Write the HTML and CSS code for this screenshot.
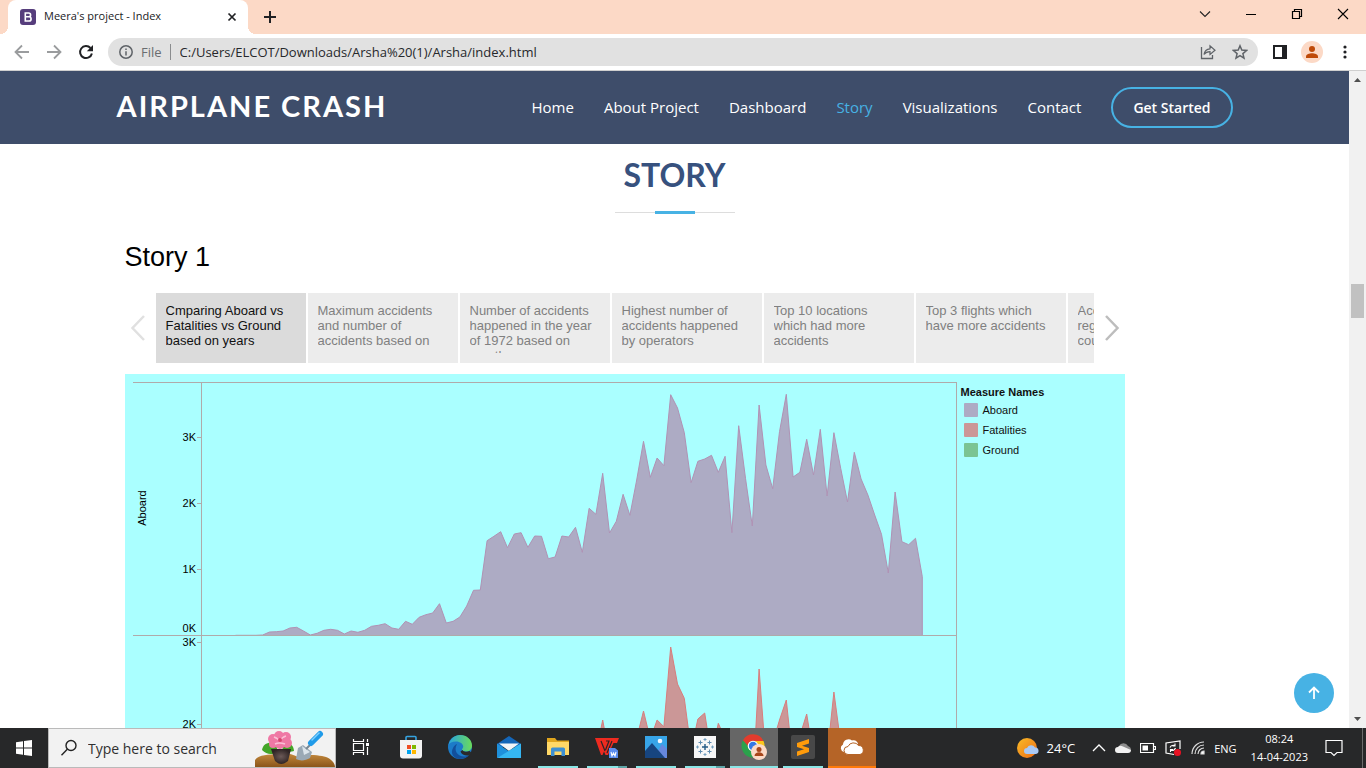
FILE: index.html
```html
<!DOCTYPE html>
<html lang="en">
<head>
<meta charset="utf-8">
<title>Meera's project - Index</title>
<link rel="stylesheet" href="styles.css">
</head>
<body>
<div class="tabstrip">
  <div class="tab">
    <svg class="favicon" width="16" height="16" viewBox="0 0 16 16" aria-hidden="true"><rect width="16" height="16" rx="3" fill="#563d7c"/><path d="M5.3 4h3.4a1.9 1.9 0 0 1 0 3.8H5.3zM5.3 7.8h3.7a2.1 2.1 0 0 1 0 4.2H5.3z" fill="none" stroke="#fff" stroke-width="1.6"/></svg>
    <span class="tab-title">Meera's project - Index</span>
    <button class="plain" aria-label="Close tab"><svg width="16" height="16" viewBox="0 0 16 16"><path d="M4.5 4.500l7 7M11.500 4.500l-7 7" stroke="#202124" stroke-width="1.700"/></svg></button>
  </div>
  <button class="plain new-tab" aria-label="New tab"><svg width="14" height="14" viewBox="0 0 14 14"><path d="M7 1v12M1 7h12" stroke="#202124" stroke-width="2"/></svg></button>
  <div class="window-buttons">
    <button class="plain" aria-label="Search tabs"><svg width="12" height="12" viewBox="0 0 12 12"><path d="M1 3.500l5 5 5-5" fill="none" stroke="#222" stroke-width="1.100"/></svg></button>
    <button class="plain" aria-label="Minimize"><svg width="12" height="12" viewBox="0 0 12 12"><path d="M1 6.500h10" stroke="#000"/></svg></button>
    <button class="plain" aria-label="Restore"><svg width="12" height="12" viewBox="0 0 12 12"><path d="M1.500 3.500h7v7h-7zM3.500 3.500v-2h7v7h-2" fill="none" stroke="#000" stroke-width="1.200"/></svg></button>
    <button class="plain" aria-label="Close"><svg width="12" height="12" viewBox="0 0 12 12"><path d="M1 1l10 10M11 1L1 11" stroke="#000" stroke-width="1.100"/></svg></button>
  </div>
</div>
<div class="toolbar">
  <button class="plain" aria-label="Back"><svg width="16" height="16" viewBox="0 0 16 16"><path d="M15 8H2M8 1.500L1.500 8 8 14.500" fill="none" stroke="#9a9c9e" stroke-width="1.800"/></svg></button>
  <button class="plain" aria-label="Forward"><svg width="16" height="16" viewBox="0 0 16 16"><path d="M1 8h13M8 1.500L14.500 8 8 14.500" fill="none" stroke="#9a9c9e" stroke-width="1.800"/></svg></button>
  <button class="plain" aria-label="Reload"><svg width="16" height="16" viewBox="0 0 16 16"><path d="M13.900 9.500A6 6 0 1 1 12.500 4" fill="none" stroke="#202124" stroke-width="2"/><path d="M15 1v6.200H8.800z" fill="#202124"/></svg></button>
  <div class="omnibox">
    <svg width="14" height="14" viewBox="0 0 14 14" aria-hidden="true"><circle cx="7" cy="7" r="6.200" fill="none" stroke="#5f6368" stroke-width="1.500"/><path d="M7 6.200v4.300M7 3.500v1.500" stroke="#5f6368" stroke-width="1.500"/></svg>
    <span class="scheme">File</span>
    <input class="url" type="text" aria-label="Address" value="C:/Users/ELCOT/Downloads/Arsha%20(1)/Arsha/index.html">
    <button class="plain" aria-label="Share"><svg width="16" height="16" viewBox="0 0 16 16"><path d="M1.500 3v11.500h11V11" fill="none" stroke="#5f6368" stroke-width="1.300"/><path d="M4 10.500C4.500 7 7 5 10 4.800V1.800L15 6.300l-5 4.200V7.700C7.500 7.700 5.500 8.500 4 10.500z" fill="none" stroke="#5f6368" stroke-width="1.200"/></svg></button>
    <button class="plain" aria-label="Bookmark"><svg width="16" height="16" viewBox="0 0 16 16"><path d="M8 1.800l1.800 4.300 4.700.4-3.600 3.100 1.100 4.600L8 11.700l-4 2.500 1.100-4.600-3.600-3.100 4.700-.4z" fill="none" stroke="#5f6368" stroke-width="1.500"/></svg></button>
  </div>
  <button class="plain" aria-label="Side panel"><svg width="14" height="14" viewBox="0 0 14 14"><path d="M1 1h12v12H1z" fill="none" stroke="#202124" stroke-width="2"/><path d="M9 0h5v14H9z" fill="#202124"/></svg></button>
  <button class="plain" aria-label="Profile"><svg width="22" height="22" viewBox="0 0 22 22"><circle cx="11" cy="11" r="11" fill="#fcd9c6"/><circle cx="11" cy="8" r="3" fill="#bf4a08"/><path d="M5 17v-1.500c0-2 3.500-3.200 6-3.200s6 1.200 6 3.200V17z" fill="#bf4a08"/></svg></button>
  <button class="plain" aria-label="Menu"><svg width="16" height="16" viewBox="0 0 16 16" fill="#202124"><circle cx="8" cy="3" r="1.600"/><circle cx="8" cy="8" r="1.600"/><circle cx="8" cy="13" r="1.600"/></svg></button>
</div>

<div class="viewport">
  <div class="page">
    <header class="site-header">
      <div class="container header-row">
        <a class="logo" href="#">AIRPLANE CRASH</a>
        <nav class="nav">
          <a href="#">Home</a>
          <a href="#">About Project</a>
          <a href="#">Dashboard</a>
          <a class="active" href="#">Story</a>
          <a href="#">Visualizations</a>
          <a href="#">Contact</a>
          <a class="cta" href="#">Get Started</a>
        </nav>
      </div>
    </header>
    <main class="container">
      <div class="section-title">
        <h2>STORY</h2>
        <div class="rule"></div>
      </div>
      <section class="story">
        <h3>Story 1</h3>
        <div class="points">
          <button class="plain arrow" aria-label="Previous"><svg width="16" height="28" viewBox="0 0 16 28"><path d="M14 2L2.500 14 14 26" fill="none" stroke="#e0e0e0" stroke-width="2.500"/></svg></button>
          <div class="point-list">
            <button class="point selected"><span>Cmparing Aboard vs Fatalities vs Ground based on years</span></button>
            <button class="point"><span>Maximum accidents and number of accidents based on</span></button>
            <button class="point"><span>Number of accidents happened in the year of 1972 based on month</span></button>
            <button class="point"><span>Highest number of accidents happened by operators</span></button>
            <button class="point"><span>Top 10 locations which had more accidents</span></button>
            <button class="point"><span>Top 3 flights which have more accidents</span></button>
            <button class="point"><span>Accidents in<br>regions of<br>countries</span></button>
          </div>
          <button class="plain arrow" aria-label="Next"><svg width="16" height="28" viewBox="0 0 16 28"><path d="M2 2l11.500 12L2 26" fill="none" stroke="#bdbdbd" stroke-width="2.500"/></svg></button>
        </div>
        <div class="dashboard">
          <svg class="chart" viewBox="0 0 832 510" role="img" aria-label="Aboard and Fatalities by year">
            <g class="axis">
              <path d="M8 8.500h824M8 261.500h824M76.500 8v502M831.500 8v502M72 63.500h4M72 129.500h4M72 195.500h4M72 268.500h4M72 350.500h4"/>
            </g>
            <path id="aboard-area" class="aboard-area"/><path id="aboard-line" class="aboard-line"/>
            <path id="fatal-area" class="fatal-area"/><path id="fatal-line" class="fatal-line"/>
            <path class="axis" d="M76 261.500h756"/>
            <g class="ticks">
              <text x="71" y="67">3K</text><text x="71" y="133">2K</text><text x="71" y="199">1K</text><text x="71" y="258">0K</text>
              <text x="71" y="272">3K</text><text x="71" y="354">2K</text>
            </g>
            <text class="axis-name" transform="translate(21 134) rotate(-90)" text-anchor="middle">Aboard</text>
          </svg>
          <div class="legend">
            <h4>Measure Names</h4>
            <ul>
              <li><i class="swatch aboard"></i>Aboard</li>
              <li><i class="swatch fatal"></i>Fatalities</li>
              <li><i class="swatch ground"></i>Ground</li>
            </ul>
          </div>
        </div>
      </section>
    </main>
  </div>
  <div class="scrollbar" aria-hidden="true">
    <svg width="17" height="17" viewBox="0 0 17 17"><path d="M5 11h7L8.500 7z" fill="#505050"/></svg>
    <div class="track"><div class="thumb"></div></div>
    <svg width="17" height="17" viewBox="0 0 17 17"><path d="M5 6h7l-3.500 4z" fill="#505050"/></svg>
  </div>
  <a class="to-top" href="#" aria-label="Back to top"><svg width="16" height="16" viewBox="0 0 16 16"><path d="M8 14V3M3 7.500L8 2.500l5 5" fill="none" stroke="#fff" stroke-width="1.800"/></svg></a>
</div>

<footer class="taskbar">
  <button class="start" aria-label="Start"><svg width="16" height="16" viewBox="0 0 16 16" fill="#fff"><path d="M0 2.200L7 1.200v6.300H0zM8 1l8-1v7.500H8zM0 8.500h7v6.300L0 13.800zM8 8.500h8V16l-8-1z"/></svg></button>
  <label class="search">
    <svg width="18" height="18" viewBox="0 0 18 18"><circle cx="11" cy="6.500" r="5" fill="none" stroke="#222" stroke-width="1.400"/><path d="M7.300 10.300L1.500 16.200" stroke="#222" stroke-width="1.400"/></svg>
    <input type="text" placeholder="Type here to search" aria-label="Type here to search">
    <svg width="80" height="38" viewBox="0 0 80 38">
      <defs><linearGradient id="soil" x1="0" y1="0" x2="0" y2="1"><stop offset="0" stop-color="#c68b3f"/><stop offset="1" stop-color="#8a5519"/></linearGradient><radialGradient id="pot"><stop offset="0" stop-color="#6c5a58"/><stop offset="1" stop-color="#2e2424"/></radialGradient></defs>
      <path d="M0 38v-7c4-6 14-5 22-6 8-2 15 0 21 3 8-3 18-2 24-1 7 1 13 6 13 11z" fill="url(#soil)"/>
      <path d="M7 21c1-7 8-9 14-6l2 8c-6 3-11 3-16-2zM30 13c5 0 9 4 9 9-5 2-9 0-12-3z" fill="#43a528"/>
      <path d="M16 20h20l-3 12q-7 6-13 0z" fill="url(#pot)"/>
      <g fill="#ef78a5"><circle cx="18" cy="10" r="5"/><circle cx="24" cy="7" r="5"/><circle cx="31" cy="8" r="5"/><circle cx="32" cy="14" r="5"/><circle cx="25" cy="15" r="5"/><circle cx="18" cy="15" r="4"/><circle cx="25" cy="11" r="6"/></g>
      <path d="M19 8q5 2 5 4M31 7q-4 1-6 5M20 15q4-2 10 0" stroke="#fac0d6" stroke-width="1.500" fill="none"/><circle cx="25" cy="11" r="2" fill="#d8456f"/>
      <path d="M43 19l5-3 9 7-2 6c-5 3-10 3-14 1z" fill="#9aa9b5"/><path d="M47 17l8 6-6 3z" fill="#dce5eb"/>
      <path d="M51 20l7-7" stroke="#798894" stroke-width="2"/><path d="M56 14l9-9" stroke="#209be9" stroke-width="6" stroke-linecap="round"/><path d="M57 11l7-7" stroke="#7ed0ff" stroke-width="1.500" stroke-linecap="round"/>
    </svg>
  </label>
  <button class="app taskview" aria-label="Task view"><svg width="18" height="18" viewBox="0 0 18 18" fill="none" stroke="#fff" stroke-width="1.200"><path d="M1.500 5.500h10v7h-10zM1.500 1v2.500h10V1M1.500 17v-2.500h10V17M15.500 1v3M15.500 9v8"/><path d="M14 5h3v3h-3z" fill="#fff" stroke="none"/></svg></button>
  <button class="app" aria-label="Microsoft Store"><svg width="24" height="24" viewBox="0 0 24 24"><path d="M7 6V2.500Q7 1.500 8 1.500h8q1 0 1 1V6" fill="none" stroke="#36a3e0" stroke-width="1.600"/><path d="M1 5h22v15.500q0 3-3 3H4q-3 0-3-3z" fill="#f3f3f3"/><path d="M8 10h4v4H8z" fill="#f04e23"/><path d="M13 10h4v4h-4z" fill="#7fb900"/><path d="M8 15h4v4H8z" fill="#00a3ee"/><path d="M13 15h4v4h-4z" fill="#ffb800"/></svg></button>
  <button class="app" aria-label="Microsoft Edge"><svg width="24" height="24" viewBox="0 0 24 24"><defs><linearGradient id="edge-a" x1="0" x2="1"><stop offset="0" stop-color="#28a4df"/><stop offset="1" stop-color="#6bdc5a"/></linearGradient></defs><circle cx="12" cy="12" r="12" fill="#1c7bc8"/><path d="M.5 10C2 3.500 7 0 12 0c7 0 12 5 12 10.500 0 4-3 6-6 6-2.500 0-4-1-4-2 0-.8 1.200-1.300 1.200-3C15.200 9 12 6.500 8 6.500S1.500 8 .5 10z" fill="url(#edge-a)"/><path d="M9 9c-4 7 1 13 8 12.500 2 0 3.500-.8 4.700-1.900C19.500 22.500 16 24 12 24 5.500 24 2 18 5 13c1-2 2.500-3.500 4-4z" fill="#124f9c"/><path d="M14.500 15c1 2 4 2 7 1l2.500 2-2.500 2c-3 1.500-8 0-9-3.500z" fill="#2a2a2a"/></svg></button>
  <button class="app" aria-label="Mail"><svg width="24" height="24" viewBox="0 0 24 24"><path d="M0 9l12-8 12 8v3H0z" fill="#1466b8"/><path d="M2 8.500h20L12 16z" fill="#f2f5f8"/><path d="M0 8.500L13 17 0 23z" fill="#1e90dc"/><path d="M24 8.500V23H0z" fill="#35b6f2"/></svg></button>
  <button class="app open" aria-label="File Explorer"><svg width="24" height="24" viewBox="0 0 24 24"><path d="M1 3h8l2 2.500h12V12H1z" fill="#e0a61e"/><path d="M1 7h22v13H1z" fill="#ffd867"/><path d="M5 21v-7q0-1.500 1.500-1.500h11Q19 12.500 19 14v7h-3.500v-4.500h-7V21z" fill="#3d8fd1"/></svg></button>
  <button class="app open stacked" aria-label="WPS Office"><svg width="26" height="26" viewBox="0 0 26 26"><path d="M1 4h24l-2 5h-3.500L14 21h-2.500L10 17.500 8.500 21H7z" fill="#ee2b20"/><path d="M7 7l4 10M12 7h3l-3.500 9M18 7l-5 12" fill="none" stroke="#2b2526" stroke-width="1.200"/><path d="M15 14h6l3 2.500V24h-9z" fill="#5b8def"/><path d="M17 18l1 4 1.500-3 1.500 3 1-4" fill="none" stroke="#fff" stroke-width="1.100"/></svg></button>
  <button class="app open" aria-label="Photos"><svg width="22" height="22" viewBox="0 0 22 22"><path d="M0 0h22v22H0z" fill="#37a5e8"/><path d="M9 22L17 8l5 5v9z" fill="#6688dd"/><path d="M0 15l7-8 13 15H0z" fill="#17457f"/><circle cx="15" cy="5" r="2.300" fill="#f5f8ff"/></svg></button>
  <button class="app open stacked" aria-label="Tableau"><svg width="22" height="22" viewBox="0 0 22 22"><path d="M0 0h22v22H0z" fill="#f7f7f7"/><path d="M11 8v6M8 11h6" stroke="#245b87" stroke-width="1.400"/><path d="M6.500 4.500v4M4.500 6.500h4M15.500 4.500v4M13.500 6.500h4M6.500 13.500v4M4.500 15.500h4M15.500 13.500v4M13.500 15.500h4" stroke="#5c8bb0"/><path d="M11 2v3M9.500 3.500h3M11 17v3M9.500 18.500h3M3.500 9.500v3M2 11h3M18.500 9.500v3M17 11h3" stroke="#739fbf"/></svg></button>
  <button class="app open current" aria-label="Google Chrome"><svg width="26" height="26" viewBox="0 0 26 26"><circle cx="12" cy="12" r="11.500" fill="#2ba24c"/><path d="M2 6.300A11.500 11.500 0 0 1 22.500 7H12a5 5 0 0 0-5 5z" fill="#e33b2e"/><path d="M22.500 7A11.500 11.500 0 0 1 12 23.500l5-9q1-4-3-7.500z" fill="#fdc51c"/><circle cx="12" cy="12" r="5.300" fill="#fff"/><circle cx="12" cy="12" r="4.200" fill="#3478e5"/><circle cx="18" cy="18" r="8" fill="#fcd9c6"/><circle cx="18" cy="15.500" r="2.500" fill="#a8461a"/><path d="M13.500 22c0-5 9-5 9 0z" fill="#a8461a"/></svg></button>
  <button class="app open" aria-label="Sublime Text"><svg width="24" height="24" viewBox="0 0 24 24"><rect width="24" height="24" rx="2" fill="#484848"/><path d="M18 4v4.500l-7 2.200 7 2.300v4L6 21v-4.500l7-2.200L6 12V8z" fill="#ff9b0a"/></svg></button>
  <button class="app attention" aria-label="OneDrive"><svg width="26" height="24" viewBox="0 0 26 24" fill="#fff"><path d="M5 17a4 4 0 0 1-1-7.500A5.500 5.500 0 0 1 13 5.500c3-1 6 1 6 4z"/><path d="M9 19.500a4 4 0 0 1 0-8 6 6 0 0 1 10.500-1A4.600 4.600 0 0 1 21 19.500z" stroke="#b56427"/></svg></button>

  <div class="tray">
    <button class="plain weather" aria-label="Weather, 24°C"><svg width="22" height="20" viewBox="0 0 22 20"><defs><linearGradient id="sun" x1="0" x2="1" y2="1"><stop offset="0" stop-color="#f9bc26"/><stop offset="1" stop-color="#ee6c17"/></linearGradient></defs><circle cx="10" cy="10" r="10" fill="url(#sun)"/><path d="M10 16a3 3 0 0 1 0-6 4.500 4.500 0 0 1 8-.5 3.300 3.300 0 0 1 1 6.500z" fill="#a9c9f5"/></svg>24°C</button>
    <div class="tray-icons">
      <svg width="14" height="14" viewBox="0 0 14 14"><path d="M1 10l6-6 6 6" fill="none" stroke="#fff" stroke-width="1.300"/></svg>
      <svg width="16" height="12" viewBox="0 0 16 12"><path d="M2 8a4 4 0 0 1 2-4 5 5 0 0 1 9 0q3 1 3 4z" fill="#8d8d8d"/><path d="M3 11a3 3 0 0 1 0-6q2-2 5-.5L16 8q0 3-3 3z" fill="#f1f1f1"/></svg>
      <svg width="16" height="10" viewBox="0 0 16 10"><path d="M.5.500h13v9H.500zM14 3.500h1.500v3H14" fill="none" stroke="#fff" stroke-width="1.200"/><path d="M2.500 2.500H8v5H2.500z" fill="#fff"/></svg>
      <svg width="17" height="16" viewBox="0 0 17 16"><path d="M9 14.500L1 13V3l14-2v8" fill="none" stroke="#fff" stroke-width="1.200"/><path d="M5 7.500q1-3 5-2M10 3.500v2.500H7.500M10.500 8q-1 3-5 2.500M5.500 12V9.500H8" fill="none" stroke="#fff" stroke-width="1.100"/><circle cx="12.500" cy="12.500" r="3.500" fill="#e81123"/></svg>
      <svg width="14" height="14" viewBox="0 0 14 14" fill="none" stroke="#ddd" stroke-width="1.200"><path d="M1 13A12 12 0 0 1 13 1M4 13a9 9 0 0 1 9-9M7 13a6 6 0 0 1 6-6"/><path d="M10 13a3 3 0 0 1 3-3v3z" fill="#fff"/></svg>
      <span>ENG</span>
    </div>
    <div class="clock"><span>08:24</span><span>14-04-2023</span></div>
    <button class="plain notify" aria-label="Notifications"><svg width="18" height="18" viewBox="0 0 18 18"><path d="M1 1.500h16v12h-5l-3 3-3-3H1z" fill="none" stroke="#fff" stroke-width="1.200"/></svg></button>
  </div>
</footer>
<script src="chart.js"></script>
</body>
</html>
```
FILE: styles.css
```css
* { box-sizing: border-box; }
body { margin: 0; height: 100vh; display: flex; flex-direction: column; overflow: hidden; background: #fff; font-family: "Open Sans", "Noto Sans", sans-serif; }
svg { display: block; flex: none; }
a { text-decoration: none; }
button { font: inherit; cursor: pointer; }
.plain { border: 0; padding: 0; background: none; color: inherit; flex: none; }

.tabstrip { flex: none; display: flex; align-items: center; height: 34px; padding-left: 8px; background: #fcd9c6; }
.tab { position: relative; display: flex; align-items: center; gap: 8px; width: 240px; height: 34px; padding: 0 8px 0 12px; background: #fff; border-radius: 8px 8px 0 0; }
.tab::before, .tab::after { content: ""; position: absolute; bottom: 0; width: 8px; height: 8px; }
.tab::before { left: -8px; background: radial-gradient(circle at 0 0, transparent 8px, #fff 8px); }
.tab::after { right: -8px; background: radial-gradient(circle at 100% 0, transparent 8px, #fff 8px); }
.tab-title { flex: 1; font-size: 11px; line-height: 16px; padding-bottom: 2px; color: #202124; }
.new-tab { margin-left: 15px; }
.window-buttons { display: flex; gap: 34px; margin-left: auto; padding: 0 17px 6px 0; }

.toolbar { flex: none; display: flex; align-items: center; gap: 16px; height: 37px; padding: 0 13px 0 14px; border-bottom: 1px solid #cfcfcf; }
.toolbar > .plain:nth-last-child(-n+2) { margin-left: -2px; }
.omnibox { flex: 1; display: flex; align-items: center; gap: 8px; height: 28px; padding: 0 10px 0 11px; margin-left: -2px; margin-right: -1px; border-radius: 14px; background: #e1e1e1; }
.omnibox .plain + .plain { margin-left: 8px; }
.scheme { padding-right: 8px; border-right: 1px solid #8a8c8e; font-size: 13px; line-height: 16px; color: #6a6d70; }
.url { flex: 1; min-width: 0; padding: 0 0 0 1px; border: 0; background: none; font-family: inherit; font-size: 13px; color: #26282b; }

.viewport { position: relative; flex: 1; min-height: 0; display: flex; }
.page { flex: 1; min-width: 0; overflow: hidden; }
.container { max-width: 1140px; margin: 0 auto; padding: 0 12px; }
.site-header { background: #3e4d6a; padding: 16px 0; }
.header-row { display: flex; align-items: center; justify-content: space-between; }
.logo { padding-bottom: 4px; font-family: Lato, sans-serif; font-size: 29px; line-height: 36px; font-weight: 700; letter-spacing: 2px; color: #fff; }
.nav { display: flex; align-items: center; gap: 30px; font-size: 15px; font-weight: 500; }
.nav a { color: #fff; line-height: 20px; padding-bottom: 2px; }
.nav .active { color: #47b2e4; }
.nav .cta { padding: 8px 20px; line-height: 21px; border: 2px solid #47b2e4; border-radius: 50px; font-size: 14px; font-weight: 600; }

.section-title { display: flex; flex-direction: column; align-items: center; padding-top: 12px; }
.section-title h2 { margin: 0 0 17px; font-family: Lato, sans-serif; font-size: 32px; line-height: 38px; font-weight: 700; color: #37517e; }
.rule { width: 120px; height: 3px; background: linear-gradient(#47b2e4, #47b2e4) center / 40px 3px no-repeat, linear-gradient(#ddd, #ddd) center / 120px 1px no-repeat; }

.story { max-width: 1000px; margin: 28px 8px 0; font-family: "Liberation Sans", Arial, sans-serif; }
.story h3 { margin: 0 0 20px; font-size: 27px; line-height: 31px; font-weight: 400; color: #000; }
.points { display: flex; align-items: stretch; height: 70px; margin-bottom: 11px; }
.arrow { width: 31px; display: flex; align-items: center; justify-content: center; }
.arrow:first-child { padding-right: 4px; }
.arrow:last-child { padding-left: 5px; }
.point-list { flex: 1; min-width: 0; display: flex; gap: 2px; overflow: hidden; }
.point { flex: none; width: 150px; padding: 10px; border: 0; display: flex; align-items: flex-start; text-align: left; background: #ececec; color: #808080; font-size: 13px; line-height: 15px; }
.point span { max-height: 50px; overflow: hidden; }
.point.selected { background: #dbdbdb; color: #111; }

.dashboard { display: flex; background: #aff; }
.chart { flex: 0 1 832px; min-width: 0; overflow: hidden; }
.axis { fill: none; stroke: #b0aaaa; stroke-width: 1; }
.ticks { font-size: 11px; text-anchor: end; }
.axis-name { font-size: 11px; }
.aboard-area { fill: #adabc4; }
.aboard-line { fill: none; stroke: #b092b4; stroke-width: 1; }
.fatal-area { fill: #cb9797; }
.fatal-line { fill: none; stroke: #d87d7d; stroke-width: 1; }
.legend { padding: 12px 4px; font-size: 11px; color: #111; }
.legend h4 { margin: 0 0 4px; font-size: 11px; line-height: 13px; }
.legend ul { margin: 0; padding: 0 0 0 3px; list-style: none; display: flex; flex-direction: column; gap: 6px; }
.legend li { display: flex; align-items: center; gap: 5px; height: 14px; line-height: 14px; }
.swatch { width: 14px; height: 14px; border-radius: 1px; }
.swatch.aboard { background: #adabc4; }
.swatch.fatal { background: #cb9797; }
.swatch.ground { background: #7bc493; }

.scrollbar { flex: none; width: 17px; display: flex; flex-direction: column; background: #f1f1f1; }
.track { flex: 1; padding: 0 2px; }
.thumb { height: 34px; margin-top: 196px; background: #c1c1c1; }
.to-top { position: absolute; right: 32px; bottom: 15px; width: 40px; height: 40px; border-radius: 50%; display: flex; align-items: center; justify-content: center; background: #47b2e4; }

.taskbar { flex: none; display: flex; height: 40px; gap: 1px; background: #272829; color: #fff; }
.start { width: 48px; border: 0; padding: 0; background: none; display: flex; align-items: center; justify-content: center; margin-right: -1px; }
.search { width: 288px; display: flex; align-items: center; gap: 10px; padding-left: 11px; margin-right: -1px; border: 1px solid #bababa; background: #f2f2f2; }
.search input { flex: 1; min-width: 0; padding: 0; border: 0; background: none; font-family: inherit; font-size: 14px; }
.search input::placeholder { color: #303030; opacity: 1; }
.app { flex: none; width: 48px; padding: 0; border: 0; border-bottom: 2px solid transparent; background: none; display: flex; align-items: center; justify-content: center; }
.taskview { width: 50px; }
.open { background: linear-gradient(#8ae6e6, #8ae6e6) center bottom / 40px 2px no-repeat border-box; }
.stacked { background: linear-gradient(90deg, #8ae6e6 31px, #5ea5a7 31px) center bottom / 40px 2px no-repeat border-box; }
.current { width: 48px; background: #666; border-bottom-color: #8ae6e6; }
.attention { background: #b56427; border-bottom-color: #ff7a0a; }
.tray { display: flex; align-items: center; margin-left: auto; padding-right: 3px; }
.weather { display: flex; align-items: center; gap: 8px; font-size: 13px; margin-right: 17px; }
.tray-icons { display: flex; align-items: center; gap: 9px; font-size: 11px; margin-right: 14px; }
.clock { display: flex; flex-direction: column; align-items: center; font-size: 11px; line-height: 18px; }
.notify { padding: 11px 19px 11px 17px; border-right: 1px solid #6b6b6b; }
```
FILE: chart.js
```js
// Heights are in thirds of a pixel, measured down from the top of the panel.
const STEP = 6.8;
const PEAK_X = 545.7;

const aboard = { first: -64, base: 767, values: [
  766, 766, 766, 766, 765, 756, 755, 753, 744, 742, 753, 765, 760, 751, 748, 751, 762, 753, 757, 751,
  739, 736, 731, 744, 748, 724, 733, 712, 704, 699, 671, 729, 724, 711, 678, 631, 630, 482, 469, 455,
  503, 462, 458, 502, 468, 469, 536, 531, 468, 471, 442, 517, 385, 403, 280, 459, 424, 343, 406, 300,
  184, 292, 234, 257, 44, 84, 158, 308, 244, 237, 226, 277, 229, 458, 137, 295, 438, 75, 255, 326,
  155, 43, 291, 277, 178, 285, 148, 348, 158, 265, 366, 217, 297, 345, 405, 463, 579, 336, 485, 494,
  475, 590] };

const fatalities = { first: -12, base: 1500, values: [
  1200, 1120, 1020, 1130, 1200, 1130, 1200, 1075, 993, 1078, 1020, 1040, 801, 912, 955, 1110, 1017,
  999, 1130, 1030, 1075, 1200, 1150, 1200, 1240, 867, 1140, 1090, 1020, 960, 1155, 1067, 1002, 1130,
  1120, 1130, 936, 1090, 1200] };

function draw(series, areaId, lineId) {
  const x = i => (PEAK_X + STEP * (series.first + i)).toFixed(1);
  const y = v => (6 + v / 3).toFixed(1);
  const line = series.values.map((v, i) => x(i) + " " + y(v)).join("L");
  const last = x(series.values.length - 1);
  const base = y(series.base);
  document.getElementById(areaId).setAttribute("d", "M" + x(0) + " " + base + "L" + line + "L" + last + " " + base + "Z");
  document.getElementById(lineId).setAttribute("d", "M" + line + "L" + last + " " + base);
}

draw(aboard, "aboard-area", "aboard-line");
draw(fatalities, "fatal-area", "fatal-line");
```
